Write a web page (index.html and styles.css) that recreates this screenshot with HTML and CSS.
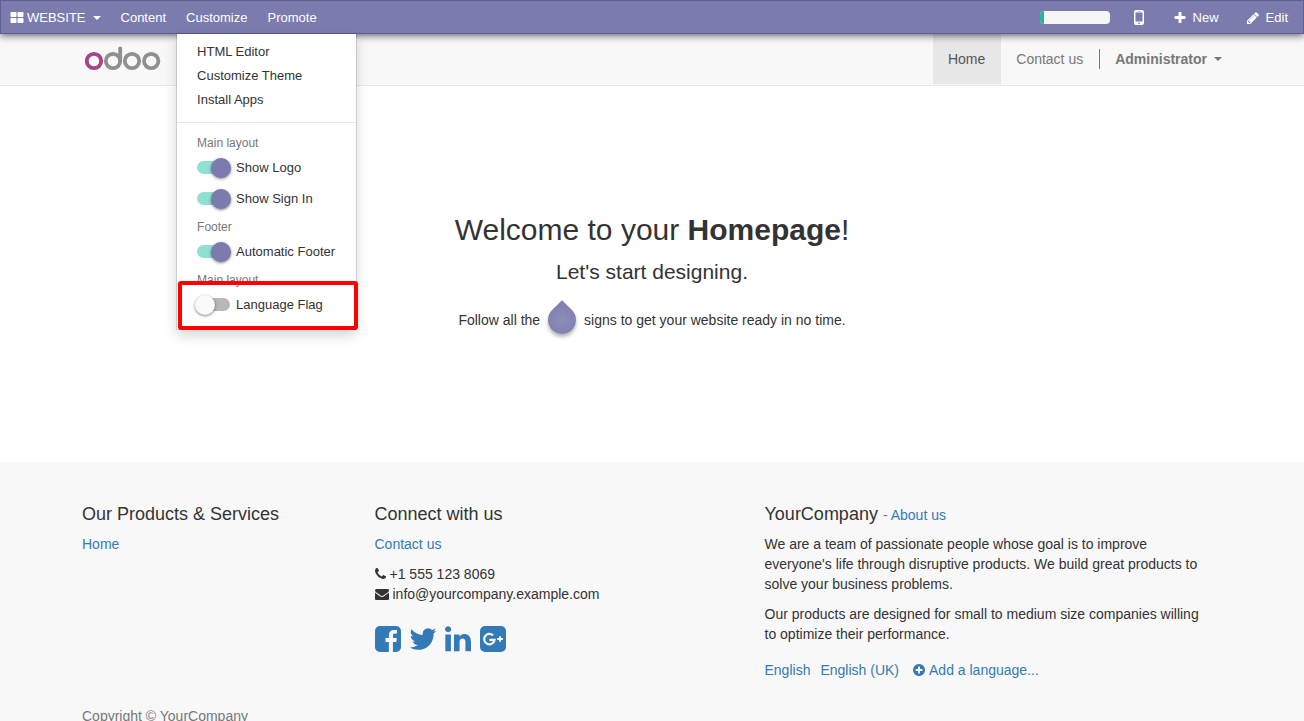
FILE: index.html
```html
<!DOCTYPE html>
<html lang="en">
<head>
<meta charset="utf-8">
<meta name="viewport" content="width=device-width, initial-scale=1">
<title>Homepage | YourCompany</title>
<link rel="stylesheet" href="styles.css">
</head>
<body>
<nav class="topbar" aria-label="Website editor">
  <div class="topbar-group">
    <button class="bar-item brand" type="button">
      <svg class="icon-14" viewBox="0 0 1792 1792" aria-hidden="true"><path d="M832 1024v384q0 52-38 90t-90 38h-512q-52 0-90-38t-38-90v-384q0-52 38-90t90-38h512q52 0 90 38t38 90zm0-768v384q0 52-38 90t-90 38h-512q-52 0-90-38t-38-90v-384q0-52 38-90t90-38h512q52 0 90 38t38 90zm896 768v384q0 52-38 90t-90 38h-512q-52 0-90-38t-38-90v-384q0-52 38-90t90-38h512q52 0 90 38t38 90zm0-768v384q0 52-38 90t-90 38h-512q-52 0-90-38t-38-90v-384q0-52 38-90t90-38h512q52 0 90 38t38 90z"/></svg>
      <span>WEBSITE</span><span class="caret"></span>
    </button>
    <button class="bar-item" type="button">Content</button>
    <div class="dropdown">
      <button class="bar-item" type="button" aria-expanded="true">Customize</button>
      <div class="menu">
        <ul class="menu-links">
          <li><a href="#editor">HTML Editor</a></li>
          <li><a href="#theme">Customize Theme</a></li>
          <li><a href="#apps">Install Apps</a></li>
        </ul>
        <div class="menu-options">
          <div class="menu-heading">Main layout</div>
          <label class="option"><input class="switch" type="checkbox" checked>Show Logo</label>
          <label class="option"><input class="switch" type="checkbox" checked>Show Sign In</label>
          <div class="menu-heading">Footer</div>
          <label class="option"><input class="switch" type="checkbox" checked>Automatic Footer</label>
          <div class="menu-heading">Main layout</div>
          <label class="option"><input class="switch" type="checkbox">Language Flag</label>
        </div>
        <div class="highlight"></div>
      </div>
    </div>
    <button class="bar-item" type="button">Promote</button>
  </div>
  <div class="topbar-group tools">
    <div class="progress" role="progressbar" aria-label="Setup progress" aria-valuenow="6" aria-valuemin="0" aria-valuemax="100"><div class="progress-fill" style="width:6%"></div></div>
    <button class="bar-item mobile" type="button" aria-label="Mobile preview">
      <svg class="icon-mobile" viewBox="0 0 10 15" aria-hidden="true"><path fill-rule="evenodd" d="M2 0h6a2 2 0 0 1 2 2v11a2 2 0 0 1-2 2h-6a2 2 0 0 1-2-2v-11a2 2 0 0 1 2-2zM1.500 2.500v9h7v-9zM5 12.400a.9.9 0 1 0 0 1.800a.9.9 0 0 0 0-1.800zM3.700 1v.6h2.600v-.6z"/></svg>
    </button>
    <button class="bar-item tool" type="button">
      <svg class="icon-14" viewBox="0 0 1792 1792" aria-hidden="true"><path d="M1600 736v192q0 40-28 68t-68 28h-416v416q0 40-28 68t-68 28h-192q-40 0-68-28t-28-68v-416h-416q-40 0-68-28t-28-68v-192q0-40 28-68t68-28h416v-416q0-40 28-68t68-28h192q40 0 68 28t28 68v416h416q40 0 68 28t28 68z"/></svg>
      <span>New</span>
    </button>
    <button class="bar-item tool" type="button">
      <svg class="icon-14" viewBox="0 0 1792 1792" aria-hidden="true"><path d="M491 1536l91-91-235-235-91 91v107h128v128h107zm523-928q0-22-22-22-10 0-17 7l-542 542q-7 7-7 17 0 22 22 22 10 0 17-7l542-542q7-7 7-17zm-54-192l416 416-832 832h-416v-416zm683 96q0 53-37 90l-166 166-416-416 166-165q36-38 90-38 53 0 91 38l235 234q37 39 37 91z"/></svg>
      <span>Edit</span>
    </button>
  </div>
</nav>

<header class="site-header">
  <div class="container header-row">
    <a class="logo" href="#home" aria-label="odoo">
      <svg viewBox="0 0 76 25" aria-hidden="true"><g fill="none" stroke="#8f8f8f" stroke-width="3.800" stroke-linecap="round"><circle cx="28" cy="15" r="7.200"/><path d="M35.200 15V2.300"/><circle cx="47" cy="15" r="7.200"/><circle cx="66.200" cy="15" r="7.200"/><circle cx="9" cy="15" r="7.200" stroke="#a24689"/></g></svg>
    </a>
    <nav class="site-nav" aria-label="Main">
      <a class="nav-link active" href="#home">Home</a>
      <a class="nav-link" href="#contact">Contact us</a>
      <a class="nav-link user" href="#account">Administrator<span class="caret"></span></a>
    </nav>
  </div>
</header>

<main class="hero">
  <h1>Welcome to your <b>Homepage</b>!</h1>
  <p class="lead">Let's start designing.</p>
  <p class="hint">Follow all the <span class="drop"></span> signs to get your website ready in no time.</p>
</main>

<footer class="footer">
  <div class="container footer-grid">
    <section>
      <h2>Our Products &amp; Services</h2>
      <p><a href="#home">Home</a></p>
    </section>
    <section>
      <h2>Connect with us</h2>
      <p><a href="#contact">Contact us</a></p>
      <ul class="contact">
        <li><svg class="icon-phone" viewBox="192 128 1408 1536" aria-hidden="true"><path d="M1600 1240q0 27-10 70.500t-21 68.500q-21 50-122 106-94 51-186 51-27 0-53-3.500t-57.500-12.500-47-14.500-55.500-20.500-49-18q-98-35-175-83-127-79-264-216t-216-264q-48-77-83-175-3-9-18-49t-20.500-55.500-14.500-47-12.500-57.500-3.500-53q0-92 51-186 56-101 106-122 25-11 68.500-21t70.500-10q14 0 21 3 18 6 53 76 11 19 30 54t35 63.500 31 53.500q3 4 17.500 25t21.500 35.500 7 28.500q0 20-28.500 50t-62 55-62 53-28.500 46q0 9 5 22.500t8.500 20.500 14 24 11.500 19q76 137 174 235t235 174q2 1 19 11.500t24 14 20.500 8.500 22.500 5q18 0 46-28.500t53-62 55-62 50-28.500q14 0 28.500 7t35.500 21.500 25 17.500q25 15 53.500 31t63.500 35 54 30q70 35 76 53 3 7 3 21z"/></svg><span>+1 555 123 8069</span></li>
        <li><svg class="icon-14" viewBox="0 0 1792 1792" aria-hidden="true"><path d="M1792 710v794q0 66-47 113t-113 47h-1472q-66 0-113-47t-47-113v-794q44 49 101 87 362 246 497 345 57 42 92.500 65.500t94.500 48 110 24.500h2q51 0 110-24.500t94.500-48 92.500-65.500q170-123 498-345 57-39 100-87zm0-294q0 79-49 151t-122 123q-376 261-468 325-10 7-42.500 31t-54 38.500-52 32.500-57.500 27-50 9h-2q-23 0-50-9t-57.500-27-52-32.500-54-38.500-42.500-31q-91-64-262-182.500t-205-142.500q-62-42-117-115.500t-55-136.500q0-78 41.500-130t118.500-52h1472q65 0 112.500 47t47.500 113z"/></svg><span>info@yourcompany.example.com</span></li>
      </ul>
      <div class="social">
        <a href="#facebook" aria-label="Facebook"><svg viewBox="128 128 1536 1536" aria-hidden="true"><path d="M1376 128q119 0 203.500 84.500t84.500 203.500v960q0 119-84.500 203.500t-203.500 84.500h-188v-595h199l30-232h-229v-148q0-56 23.500-84t91.500-28l122-1v-207q-63-9-178-9-136 0-217.500 80t-81.500 226v171h-200v232h200v595h-532q-119 0-203.500-84.500t-84.500-203.500v-960q0-119 84.500-203.500t203.500-84.500h960z"/></svg></a>
        <a href="#twitter" aria-label="Twitter"><svg viewBox="128 128 1536 1536" overflow="visible" aria-hidden="true"><path d="M1684 408q-67 98-162 167 1 14 1 42 0 130-38 259.500t-115.500 248.500-184.500 210.500-258 146-323 54.500q-271 0-496-145 35 4 78 4 225 0 401-138-105-2-188-64.500t-114-159.500q33 5 61 5 43 0 85-11-112-23-185.500-111.500t-73.500-205.500v-4q68 38 146 41-66-44-105-115t-39-154q0-88 44-163 121 149 294.500 238.500t371.500 99.500q-8-38-8-74 0-134 94.500-228.500t228.500-94.500q140 0 236 102 109-21 205-78-37 115-142 178 93-10 186-50z"/></svg></a>
        <a href="#linkedin" aria-label="LinkedIn"><svg viewBox="128 128 1536 1536" aria-hidden="true"><path d="M477 625v991h-330v-991h330zm21-306q1 73-50.500 122t-135.500 49h-2q-82 0-132-49t-50-122q0-74 51.500-122.500t134.500-48.500 133 48.500 51 122.500zm1166 729v568h-329v-530q0-105-40.500-164.500t-126.500-59.500q-63 0-105.500 34.500t-63.500 85.500q-11 30-11 81v553h-329q2-399 2-647t-1-296l-1-48h329v144h-2q20-32 41-56t56.500-52 87-43.500 114.500-15.500q171 0 275 113.500t104 332.500z"/></svg></a>
        <a href="#google" aria-label="Google Plus"><svg viewBox="0 0 26 26" aria-hidden="true"><rect width="26" height="26" rx="5"/><path fill="none" stroke="#f8f8f8" stroke-width="2.300" d="M13 9.400A5.200 5.200 0 1 0 14.500 13.900H9.300"/><path fill="none" stroke="#f8f8f8" stroke-width="1.800" d="M17.300 13h5.600M20.100 10.200v5.600"/></svg></a>
      </div>
    </section>
    <section class="about">
      <h2>YourCompany <small>- <a href="#about">About us</a></small></h2>
      <p>We are a team of passionate people whose goal is to improve everyone's life through disruptive products. We build great products to solve your business problems.</p>
      <p>Our products are designed for small to medium size companies willing to optimize their performance.</p>
      <div class="languages">
        <a href="#en">English</a>
        <a href="#en-gb">English (UK)</a>
        <a class="add-language" href="#add"><svg class="icon-12" viewBox="128 128 1536 1536" aria-hidden="true"><path d="M1344 960v-128q0-26-19-45t-45-19h-256v-256q0-26-19-45t-45-19h-128q-26 0-45 19t-19 45v256h-256q-26 0-45 19t-19 45v128q0 26 19 45t45 19h256v256q0 26 19 45t45 19h128q26 0 45-19t19-45v-256h256q26 0 45-19t19-45zm320-64q0 209-103 385.500t-279.500 279.500-385.500 103-385.500-103-279.500-279.500-103-385.500 103-385.500 279.500-279.500 385.500-103 385.500 103 279.500 279.500 103 385.500z"/></svg>Add a language...</a>
      </div>
    </section>
  </div>
  <div class="container copyright">Copyright © YourCompany</div>
</footer>
</body>
</html>
```
FILE: styles.css
```css
* { box-sizing: border-box; }

html { scrollbar-width: none; }

body {
  margin: 0;
  background: #fff;
  color: #333;
  font: 14px/20px "Liberation Sans", Arial, sans-serif;
}

a { color: #337ab7; text-decoration: none; }
p { margin: 0 0 10px; }
ul { margin: 0; padding: 0; list-style: none; }
svg { display: block; flex: none; fill: currentColor; }

.icon-14 { width: 14px; height: 14px; }
.icon-12 { width: 12px; height: 12px; }
.icon-phone { width: 11px; height: 12px; }
.icon-mobile { width: 10px; height: 15px; }

.caret {
  border: 4px solid transparent;
  border-top-color: currentColor;
  border-bottom: 0;
}

.container {
  width: 100%;
  max-width: 1170px;
  margin: 0 auto;
  padding: 0 15px;
}

/* Editor bar */
.topbar {
  position: relative;
  z-index: 2;
  display: flex;
  justify-content: space-between;
  height: 34px;
  border: 1px solid #5f5e97;
  background: #7c7bad;
  box-shadow: 0 1px 8px rgba(0, 0, 0, 0.7);
}

.topbar-group { display: flex; align-items: stretch; }
.tools { align-items: center; }

.bar-item {
  display: flex;
  align-items: center;
  height: 32px;
  padding: 2px 10px 0;
  border: 0;
  background: none;
  color: #fff;
  font: inherit;
  font-size: 13px;
}

.brand { gap: 3px; padding-left: 9px; }
.brand .caret { margin-left: 4px; }
.tool { gap: 6px; padding: 2px 15px 0; }
.tool + .tool { padding-left: 12px; }
.mobile { padding: 0 14px 0 24px; }

.progress {
  width: 70px;
  height: 13px;
  overflow: hidden;
  border-radius: 4px;
  background: #f5f5f5;
}

.progress-fill { height: 100%; background: #21b799; }

/* Customize menu */
.dropdown { position: relative; }

.menu {
  position: absolute;
  top: 33px;
  left: 1px;
  width: max-content;
  padding: 6px 0 9px;
  background: #fff;
  box-shadow: 0 0 0 1px rgba(0, 0, 0, 0.12), 0 6px 12px rgba(0, 0, 0, 0.18);
  font-size: 13px;
}

.menu-links { padding-bottom: 10px; border-bottom: 1px solid #e5e5e5; }
.menu-links a { display: block; padding: 0 20px; color: #333; line-height: 24px; }
.menu-options { padding: 7px 21px 0 20px; }
.menu-heading { padding-top: 4px; color: #777; font-size: 12px; line-height: 18px; }
.option { display: flex; align-items: center; gap: 6px; height: 31px; }

.switch {
  display: flex;
  align-items: center;
  width: 33px;
  height: 13px;
  margin: 0;
  border-radius: 7px;
  appearance: none;
  background: #b8b8b8;
}

.switch::before {
  width: 20px;
  height: 20px;
  flex: none;
  margin-left: -2px;
  border-radius: 50%;
  background: #fafafa;
  box-shadow: 0 1px 3px rgba(0, 0, 0, 0.5);
  content: "";
}

.switch:checked { background: #8fe0d3; }
.switch:checked::before { margin-left: 14px; background: #7c7bad; }

.highlight {
  position: absolute;
  right: -2px;
  bottom: -1px;
  left: 1px;
  height: 49px;
  border: 4px solid #f00;
  border-radius: 3px;
}

/* Site header */
.site-header { border-bottom: 1px solid #e7e7e7; background: #f8f8f8; }
.header-row { display: flex; justify-content: space-between; }
.logo { padding: 12px 0 0 3px; }
.logo svg { width: 76px; height: 25px; }
.site-nav { display: flex; align-items: flex-start; padding-bottom: 1px; }
.nav-link { padding: 15px 16px 15px 15px; color: #777; }
.nav-link.active { background: #e7e7e7; color: #555; }

.nav-link.user {
  display: flex;
  align-items: center;
  gap: 7px;
  margin: 15px 0;
  padding: 0 0 0 15px;
  border-left: 1px solid #777;
  font-weight: bold;
}

/* Homepage */
.hero { padding: 122px 15px; text-align: center; }
.hero h1 { margin: 0 0 8px; font-size: 30px; font-weight: normal; line-height: 44px; }
.lead { margin: 0 0 16px; font-size: 21px; line-height: 24px; }
.hint { display: flex; align-items: center; justify-content: center; gap: 8px; height: 40px; margin: 0; }

.drop {
  width: 28px;
  height: 28px;
  border-radius: 0 50% 50% 50%;
  background: radial-gradient(#8f8db8, #7c7bad);
  box-shadow: 2px 2px 4px rgba(0, 0, 0, 0.3);
  transform: rotate(45deg);
}

/* Footer */
.footer { overflow: hidden; background: #f8f8f8; }
.footer-grid { display: grid; grid-template-columns: 3fr 4fr 5fr; padding: 42px 0 0; }
.footer-grid section { padding: 0 15px; }
.footer-grid .about { padding-right: 25px; }
.footer h2 { margin: 0 0 10px; font-size: 18px; font-weight: normal; line-height: 20px; }
.footer small { color: #777; font-size: 14px; line-height: 14px; }
.contact li { display: flex; align-items: center; gap: 4px; }
.social { display: flex; gap: 9px; padding-top: 22px; }
.social svg { width: 26px; height: 26px; }
.languages { display: flex; gap: 10px; padding-top: 6px; }
.add-language { display: flex; align-items: center; gap: 4px; padding-left: 4px; }
.copyright { padding-top: 26px; padding-bottom: 20px; color: #777; }
```
